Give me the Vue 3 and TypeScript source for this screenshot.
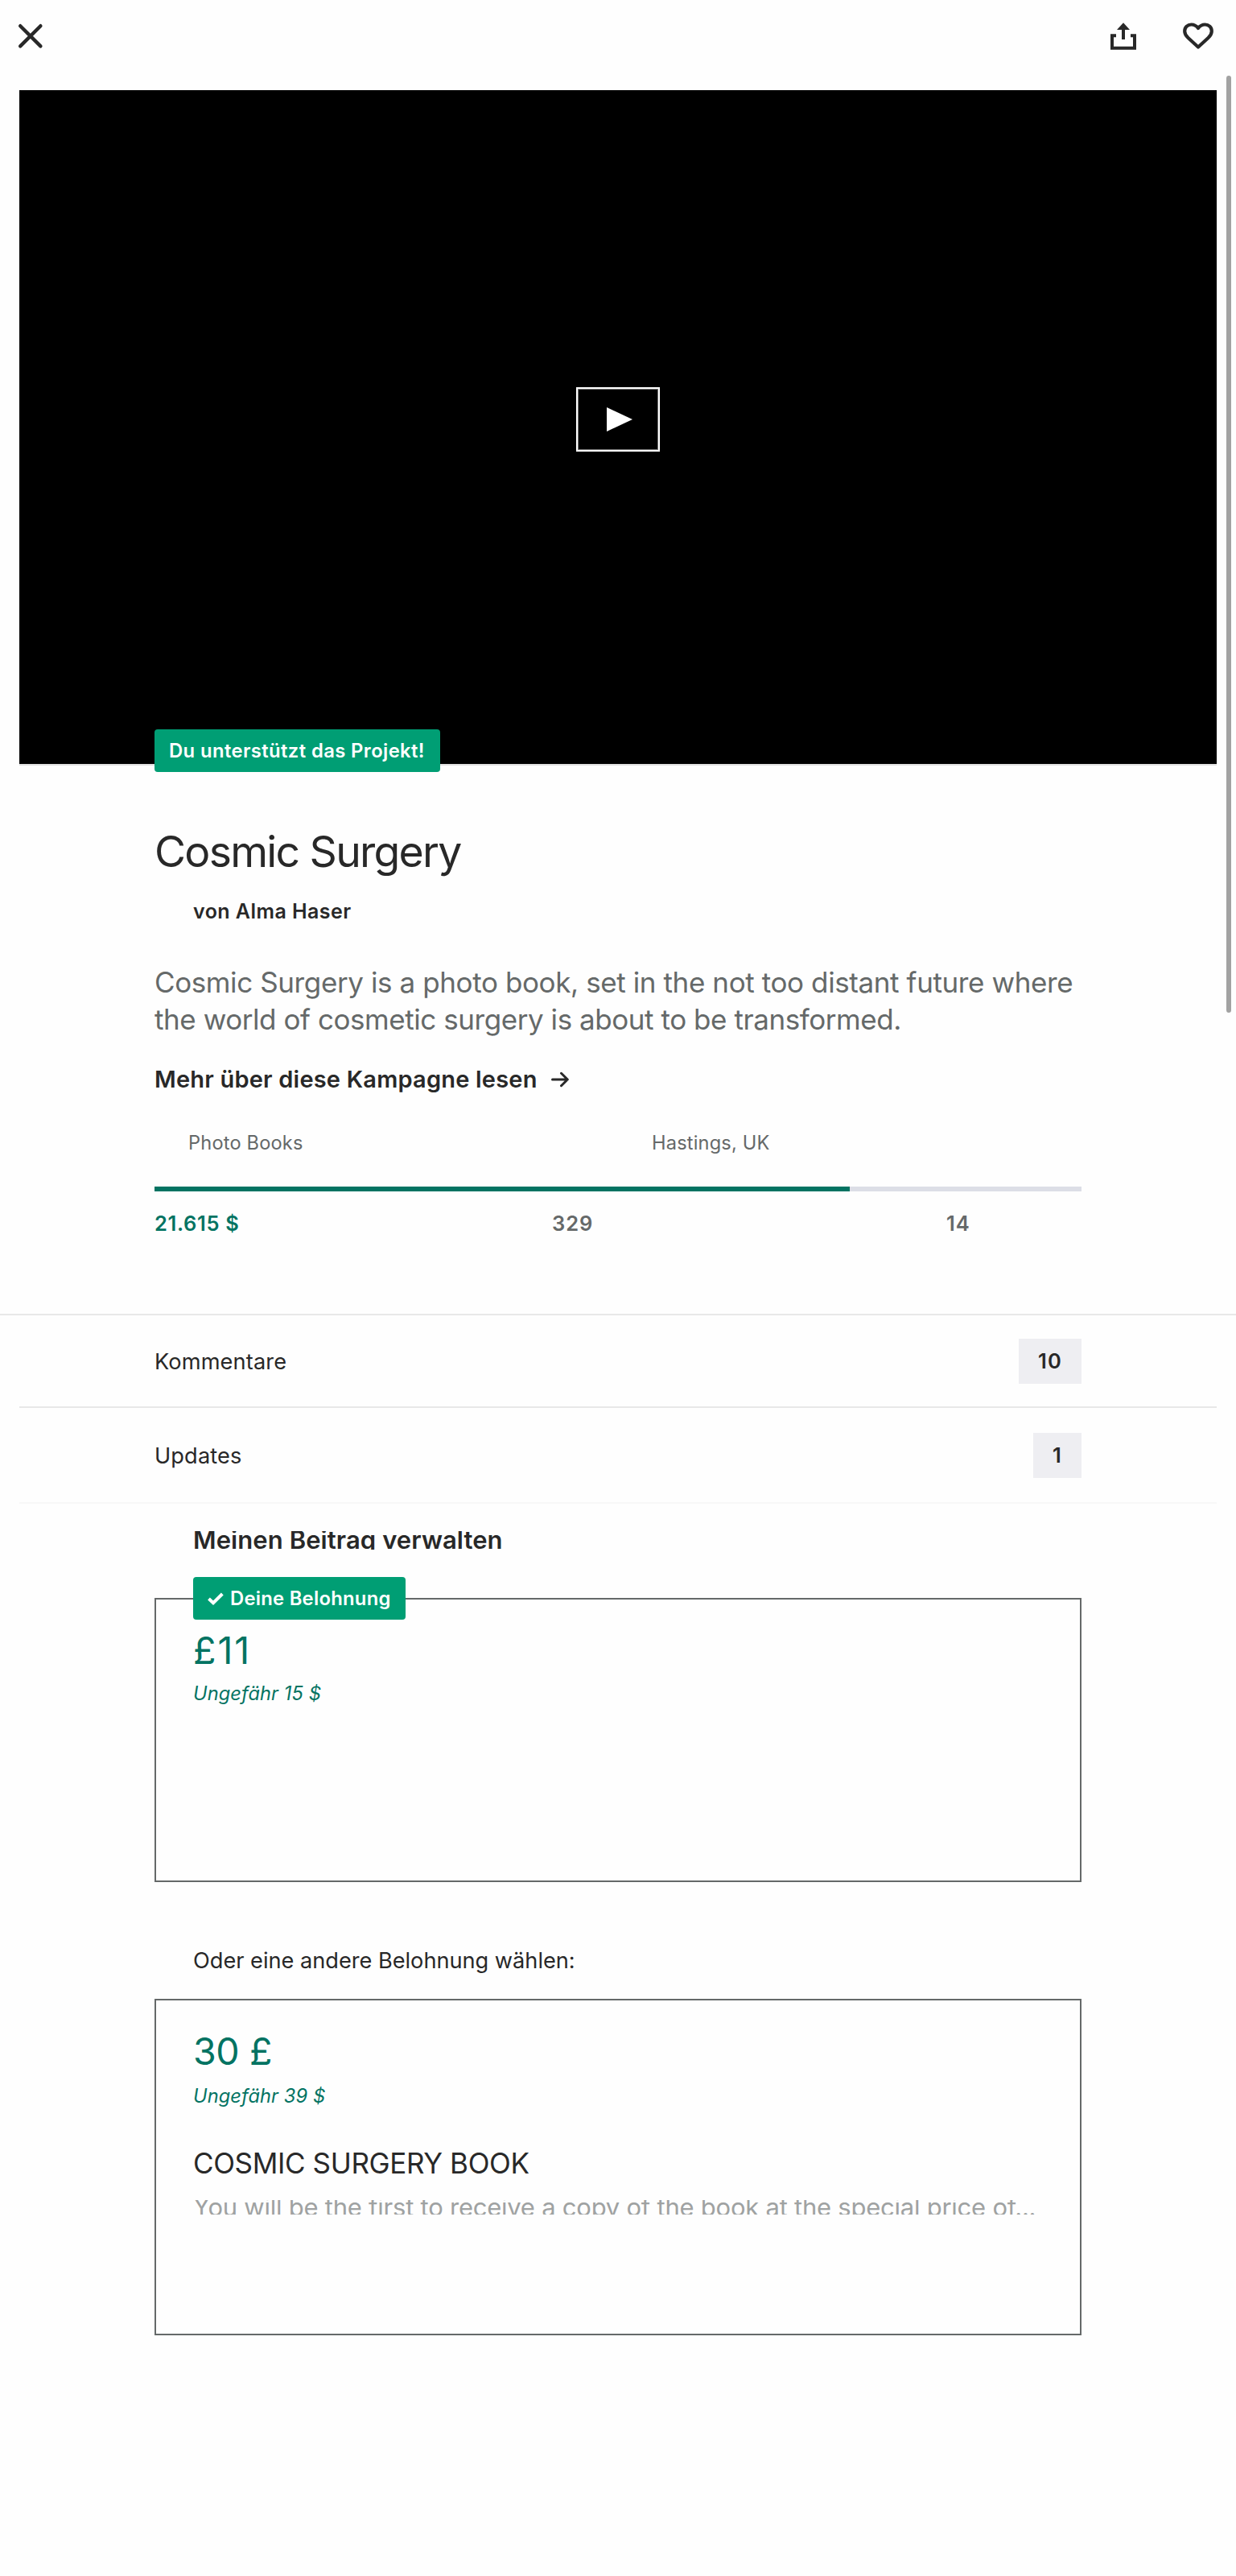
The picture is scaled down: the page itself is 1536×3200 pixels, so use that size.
<script setup lang="ts">
interface Entry {
  label: string
  count: number
}

const entries: Entry[] = [
  { label: 'Kommentare', count: 10 },
  { label: 'Updates', count: 1 },
]

const funded = 75
</script>

<template>
  <div class="page">
    <header class="bar">
      <svg class="close" width="32" height="32" viewBox="0 0 32 32">
        <path d="M3.2 3.2 28.4 28.4M28.4 3.2 3.2 28.4" fill="none" stroke="#282828" stroke-width="4.4" stroke-linecap="round" />
      </svg>
      <div class="actions">
        <svg width="32" height="34" viewBox="0 0 32 34">
          <path d="M7 16.3H2v15.4h28V16.3h-5" fill="none" stroke="#282828" stroke-width="4" />
          <path d="M16 .3 24 9h-6v12h-4V9H8z" fill="#282828" />
        </svg>
        <svg width="38" height="34" viewBox="0 0 38 34">
          <path d="M19 30.500L6.500 19C3.600 16.300 2.200 14 2.200 10.800 2.200 6 5.900 2.500 10.400 2.500c3.600 0 6.800 2 8.600 4.600 1.800-2.600 5-4.600 8.600-4.600 4.500 0 8.200 3.500 8.200 8.300 0 3.200-1.400 5.500-4.300 8.200z" fill="none" stroke="#282828" stroke-width="4.200" stroke-linejoin="round" />
        </svg>
      </div>
    </header>

    <div class="video">
      <button class="play" aria-label="Video abspielen">
        <svg width="32" height="30" viewBox="0 0 32 30"><path d="M0 0 32 15 0 30z" fill="#fff" /></svg>
      </button>
    </div>

    <main class="campaign">
      <span class="tag backed">Du unterstützt das Projekt!</span>
      <h1>Cosmic Surgery</h1>
      <p class="author">von Alma Haser</p>
      <p class="blurb">
        <span class="line one">Cosmic Surgery is a photo book, set in the not too distant future where</span>
        <span class="line two">the world of cosmetic surgery is about to be transformed.</span>
      </p>
      <a class="more">
        <span>Mehr über diese Kampagne lesen</span>
        <svg width="22" height="20" viewBox="0 0 22 20">
          <path d="M1.500 10H20M12.500 2.300 20.300 10l-7.800 7.700" fill="none" stroke="#282828" stroke-width="3" stroke-linecap="round" stroke-linejoin="round" />
        </svg>
      </a>
      <div class="meta">
        <span class="category">Photo Books</span>
        <span class="place">Hastings, UK</span>
      </div>
      <div class="track"><div class="fill" :style="{ width: funded + '%' }"></div></div>
      <div class="stats">
        <span class="pledged">21.615 $</span>
        <span class="backers">329</span>
        <span class="days">14</span>
      </div>
    </main>

    <section class="entries">
      <div v-for="entry in entries" :key="entry.label" class="entry">
        <span class="label">{{ entry.label }}</span>
        <span class="count">{{ entry.count }}</span>
      </div>
    </section>

    <section class="rewards">
      <h2>Meinen Beitrag verwalten</h2>
      <article class="card mine">
        <span class="tag chosen">
          <svg width="20" height="16" viewBox="0 0 20 16"><path d="M1.500 8 7 13.200 18.300 2" fill="none" stroke="#fff" stroke-width="4" /></svg>
          <span>Deine Belohnung</span>
        </span>
        <div class="amount">£11</div>
        <div class="approx">Ungefähr 15 $</div>
      </article>
      <p class="other">Oder eine andere Belohnung wählen:</p>
      <article class="card offer">
        <div class="amount">30 £</div>
        <div class="approx">Ungefähr 39 $</div>
        <h3>COSMIC SURGERY BOOK</h3>
        <p class="detail">You will be the first to receive a copy of the book at the special price of...</p>
      </article>
    </section>

    <div class="scrollbar"></div>
  </div>
</template>

<style>
body {
  background: #fefefe;
}
</style>

<style scoped>
.page {
  position: relative;
  width: 1536px;
  height: 3200px;
  overflow: hidden;
  background: #fefefe;
  color: #282828;
  font-family: Inter, "Liberation Sans", sans-serif;
  white-space: nowrap;
}
h1, h2, h3, p {
  margin: 0;
  font-weight: 400;
}
.bar {
  box-sizing: border-box;
  height: 112px;
  padding: 28px 28px 0 22px;
  display: flex;
  justify-content: space-between;
}
.close {
  margin-top: 1px;
}
.actions {
  display: flex;
  gap: 58px;
}
.video {
  height: 837px;
  margin: 0 24px;
  border-bottom: 2px solid #e0e0e0;
  background: #000;
  background-clip: padding-box;
  display: flex;
  align-items: flex-start;
  justify-content: center;
}
.play {
  box-sizing: border-box;
  width: 104px;
  height: 80px;
  margin-top: 369px;
  padding: 0 0 0 3px;
  border: 2px solid #fff;
  border-radius: 0;
  background: #000;
  box-shadow: inset 0 0 0 1px #777;
  display: flex;
  align-items: center;
  justify-content: center;
}
.campaign {
  padding: 0 192px;
  display: flex;
  flex-direction: column;
}
.tag {
  box-sizing: border-box;
  height: 53px;
  border-radius: 4px;
  background: #009e74;
  color: #fff;
  font-size: 23.8px;
  font-weight: 600;
  line-height: 53px;
}
.backed {
  position: relative;
  align-self: flex-start;
  width: 355px;
  margin-top: -45px;
  padding-left: 18px;
  letter-spacing: 0.4px;
}
h1 {
  margin-top: 67px;
  font-size: 53.5px;
  letter-spacing: -1.75px;
  line-height: 64px;
}
.author {
  margin: 26px 0 0 48px;
  font-size: 25px;
  font-weight: 600;
  letter-spacing: 0.45px;
  line-height: 32px;
}
.blurb {
  margin-top: 49px;
  color: #656969;
  font-size: 35px;
  line-height: 46px;
}
.line {
  display: block;
}
.one {
  letter-spacing: -0.394px;
}
.two {
  letter-spacing: -0.44px;
}
.more {
  margin-top: 32px;
  display: flex;
  align-items: center;
  gap: 17px;
  font-size: 29px;
  font-weight: 600;
  letter-spacing: 0.2px;
  line-height: 40px;
}
.meta {
  margin-top: 43px;
  display: grid;
  grid-template-columns: 1fr 1fr;
  color: #656969;
  font-size: 23.6px;
  letter-spacing: 0.18px;
  line-height: 32px;
}
.category,
.place {
  padding-left: 42px;
}
.track {
  height: 6px;
  margin-top: 38px;
  background: #dcdee6;
}
.fill {
  height: 6px;
  background: #037362;
}
.stats {
  margin-top: 24px;
  display: grid;
  grid-template-columns: 494px 490px 1fr;
  color: #656969;
  font-size: 25.5px;
  font-weight: 600;
  letter-spacing: 1px;
  line-height: 32px;
}
.pledged {
  color: #037362;
  letter-spacing: 0.65px;
}
.entries {
  margin-top: 96px;
  border-top: 2px solid #e8e8e8;
}
.entry {
  height: 113px;
  margin: 0 24px;
  padding: 0 168px;
  display: flex;
  align-items: center;
  justify-content: space-between;
  border-bottom: 2px solid #e8e8e8;
  font-size: 27.2px;
  letter-spacing: 0.12px;
  line-height: 40px;
}
.entry:last-child {
  height: 117px;
  border-color: #f7f7f7;
}
.label {
  padding-top: 2px;
}
.count {
  padding: 0 24px;
  background: #eeeef2;
  font-size: 25.5px;
  font-weight: 600;
  letter-spacing: 1.2px;
  line-height: 56px;
}
.rewards {
  padding: 0 192px;
}
h2 {
  height: 23px;
  margin: 34px 0 0 48px;
  overflow: hidden;
  font-size: 31px;
  font-weight: 600;
  letter-spacing: 0.08px;
  line-height: 22px;
}
.card {
  position: relative;
  box-sizing: border-box;
  border: 2px solid #656969;
  padding: 35px 46px 0;
}
.mine {
  height: 353px;
  margin-top: 60px;
}
.offer {
  height: 418px;
  margin-top: 27px;
}
.chosen {
  position: absolute;
  top: -28px;
  left: 46px;
  width: 264px;
  padding-left: 18px;
  display: flex;
  align-items: center;
  gap: 8px;
  letter-spacing: 0.26px;
}
.amount {
  color: #037362;
  font-size: 46.5px;
  line-height: 56px;
}
.mine .amount {
  letter-spacing: 2px;
}
.offer .amount {
  letter-spacing: -0.38px;
}
.approx {
  margin-top: 10px;
  color: #037362;
  font-size: 23.6px;
  font-style: italic;
  letter-spacing: 0.1px;
  line-height: 32px;
}
.offer .approx {
  margin-top: 12px;
}
.other {
  margin: 78px 0 0 48px;
  font-size: 27.2px;
  letter-spacing: -0.02px;
  line-height: 40px;
}
h3 {
  margin-top: 44px;
  font-size: 35px;
  letter-spacing: -0.37px;
  line-height: 46px;
}
.detail {
  height: 18px;
  margin-top: 23px;
  overflow: hidden;
  color: #9fa2a2;
  font-size: 31px;
  letter-spacing: -0.24px;
  line-height: 17px;
}
.scrollbar {
  position: absolute;
  top: 94px;
  right: 6px;
  width: 6px;
  height: 1164px;
  border-radius: 3px;
  background: #a2a2a2;
}
</style>
